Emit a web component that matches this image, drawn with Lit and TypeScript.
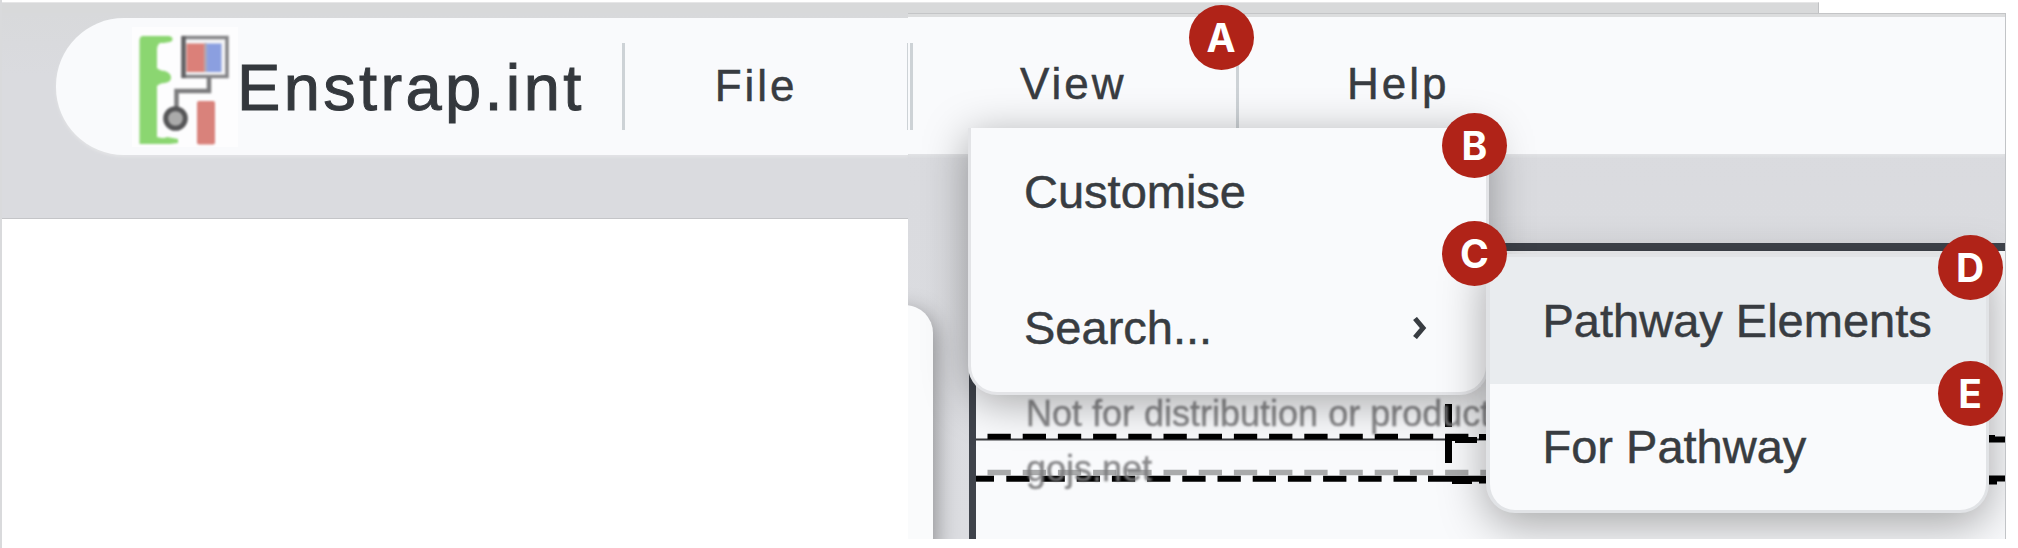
import { LitElement, html, css, svg } from "lit";
import { customElement } from "lit/decorators.js";

const BADGES = [
  { label: "A", x: 1221, y: 37.5 },
  { label: "B", x: 1474.5, y: 145 },
  { label: "C", x: 1474.5, y: 253.5 },
  { label: "D", x: 1970, y: 267.5 },
  { label: "E", x: 1970, y: 393.5 },
];

@customElement("app-logo")
class AppLogo extends LitElement {
  static styles = css`
    :host { display: block; width: 106px; height: 120px; }
    svg { display: block; }
    .soft { filter: blur(1px); }
  `;
  render() {
    return html`<svg width="106" height="120" viewBox="132 27 106 120">
      <rect x="132" y="27" width="106" height="120" fill="#fdfdfe" />
      <g class="soft">
        <path d="M142 36 H169 Q174 37 172 41 Q168 43 160 43 Q157 45 157 50 V68 Q160 71 165 71 Q171 73 171 77.500 Q171 82 165 83 Q160 83 157 86 V137 Q164 139 167 137 L178 139 V143 L170 144 H139.500 V40 Q139.500 37 142 36Z" fill="#8bd671" />
        <rect x="183.500" y="37.500" width="43.500" height="39" fill="#f4f4f6" stroke="#858588" stroke-width="3.500" />
        <path d="M183.500 36 V78" stroke="#626265" stroke-width="4.500" />
        <rect x="186.500" y="43.500" width="18" height="28.500" fill="#db8079" />
        <rect x="206.500" y="43.500" width="15" height="28.500" fill="#8b9fe0" />
        <path d="M205.500 43 V72" stroke="#a39ba7" stroke-width="2" />
        <path d="M209 78 V91 H176.500 V107" fill="none" stroke="#7c7c7e" stroke-width="4.500" />
        <ellipse cx="175.500" cy="118.500" rx="9.800" ry="9.800" fill="#aaa" stroke="#555557" stroke-width="5" />
        <rect x="197" y="101" width="18" height="43.500" rx="2" fill="#d9827b" />
      </g>
    </svg>`;
  }
}

@customElement("app-root")
class AppRoot extends LitElement {
  static styles = css`
    :host {
      display: block; position: relative; width: 2018px; height: 548px; overflow: hidden;
      background: #fff; font-family: "Liberation Sans", Arial, sans-serif; color: #383c41;
      -webkit-text-stroke: 0.5px currentColor;
    }
    .page { box-sizing: border-box; height: 548px; border-left: 2px solid #d9dadc; padding-top: 2px; }
    .strip { box-sizing: border-box; width: 1817px; height: 11px; background: #d8d9da; border-top: 1px solid #e6e6e7; border-right: 1px solid #c0c1c3; }
    .row { display: flex; align-items: flex-start; }
    .left { box-sizing: border-box; width: 906px; height: 206px; padding: 5px 0 0 54px; background: linear-gradient(#d8d9db, #dadbdf 30%); border-bottom: 1px solid #c4c5c8; }
    .pill { box-sizing: border-box; height: 137px; display: flex; align-items: center; background: #f9fafc; border-radius: 68px 0 0 68px; padding-left: 76px; box-shadow: 0 2px 3px #e3e4e6; }
    .brand { font-size: 65px; line-height: 76px; letter-spacing: 3.350px; width: 386px; margin-left: -1px; padding-top: 2px; white-space: nowrap; color: #34383d; -webkit-text-stroke-width: 1px; }
    .rule { width: 3px; height: 87px; background: #cdd2d6; flex: none; }
    .tab { font-size: 44px; line-height: 50px; letter-spacing: 3px; white-space: nowrap; }
    .file { width: 193px; padding-left: 90px; margin-bottom: 1px; }
    .hair { width: 1px; }
    .right { box-sizing: border-box; position: relative; width: 1098px; height: 526px; overflow: hidden; background: linear-gradient(#d9dade, #dcdde1); border-top: 1px solid #c4c5c7; border-right: 1px solid #c2c4c7; }
    .bar { box-sizing: border-box; height: 140px; display: flex; align-items: flex-start; background: #f9fafc; border-top: 3px solid #dcddde; padding: 26px 0 0 2px; box-shadow: 0 2px 3px #e3e4e6; }
    .view { width: 216px; padding: 16px 0 0 107px; }
    .help { padding: 16px 0 0 108px; }
    .card { position: absolute; left: -40px; top: 291px; width: 65px; height: 260px; border-radius: 28px; background: #fafbfc; box-shadow: 3px 6px 22px rgba(0,0,0,.36); }
    .canvas { position: absolute; left: 61px; top: 229px; width: 1050px; height: 320px; box-sizing: border-box; border: 8px solid #3f434b; border-width: 8px 0 0 7px; background: #f9fafc; }
    .lines { position: absolute; left: 0; top: 0; }
    .mark { position: absolute; left: 118px; top: 373px; font-size: 36px; line-height: 54.500px; color: #7d7d7f; white-space: pre; filter: blur(1.1px); opacity: .9; }
    .menu { position: absolute; box-sizing: border-box; background: #f9fafc; font-size: 47px; line-height: 54px; }
    .primary { left: 60px; top: 114px; width: 521px; height: 267px; border: 3px solid #e3e4e7; border-top: 0; border-radius: 0 0 29px 29px; box-shadow: 0 8px 44px rgba(0,0,0,.34); display: grid; grid-template-rows: 128px 127px; row-gap: 8px; }
    .secondary { left: 578px; top: 240px; width: 503px; height: 259px; border: 3px solid #e1e3e6; border-left-width: 4px; border-radius: 0 0 29px 29px; box-shadow: 0 12px 46px rgba(0,0,0,.34); display: grid; grid-template-rows: 127px 126px; }
    .item { display: flex; align-items: center; justify-content: space-between; padding: 0 59px 0 53px; white-space: nowrap; }
    .secondary .item { padding-left: 52.500px; padding-right: 0; }
    .on { background: #e9ecef; }
    .badge { position: absolute; width: 65px; height: 65px; margin: -32.500px 0 0 -32.500px; border-radius: 50%; background: #b02318; color: #fff; font: 700 39px/65px Inter, "Open Sans", sans-serif; text-align: center; -webkit-text-stroke: 0; }
  `;
  render() {
    return html`
      <div class="page">
        <div class="strip"></div>
        <div class="row">
          <section class="left">
            <div class="pill">
              <app-logo></app-logo><div class="brand">Enstrap.int</div>
              <div class="rule"></div><div class="tab file">File</div><div class="rule hair"></div>
            </div>
          </section>
          <section class="right">
            <nav class="bar">
              <div class="rule"></div><div class="tab view">View</div>
              <div class="rule"></div><div class="tab help">Help</div>
            </nav>
            <div class="canvas"></div>
            <div class="card"></div>
            <svg class="lines" width="1098" height="525" viewBox="908 14 1098 525">
              ${svg`
              <path d="M976 439.500 H1486" stroke="#38393c" stroke-width="2"/>
              <path d="M987.500 436.500 H1470" stroke="#000" stroke-width="5.500" stroke-dasharray="23.300 11.900"/>
              <path d="M987.500 472.500 H1486" stroke="#a9aaab" stroke-width="5.500" stroke-dasharray="23.300 11.900"/>
              <path d="M976 478.700 H994" stroke="#000" stroke-width="6"/>
              <path d="M1006.300 478.700 H1429" stroke="#000" stroke-width="6" stroke-dasharray="23.300 11.900"/>
              <path d="M1428 478.700 H1486 M1452 481 H1472 M1479 480.500 H1486" stroke="#000" stroke-width="6"/>
              <path d="M1445 438 H1468 M1455 440 H1477 M1479 437 H1486" stroke="#000" stroke-width="6"/>
              <path d="M1448.500 404 V427 M1448.500 437 V463" stroke="#000" stroke-width="7"/>
              <path d="M1989 438 H1995 M1989 439.500 H2006 M1989 478.500 H2006 M1989 481.500 H1997" stroke="#000" stroke-width="6"/>
              `}
            </svg>
            <div class="mark">Not for distribution or production
gojs.net</div>
            <div class="menu primary">
              <div class="item">Customise</div>
              <div class="item">Search...
                <svg width="14" height="22" viewBox="0 0 14 22"><path d="M2 1.500 L10 11 L2 20.500" fill="none" stroke="#383c41" stroke-width="5"/></svg>
              </div>
            </div>
            <div class="menu secondary">
              <div class="item on">Pathway Elements</div>
              <div class="item">For Pathway</div>
            </div>
          </section>
        </div>
      </div>
      ${BADGES.map((b) => html`<div class="badge" style="left:${b.x}px;top:${b.y}px">${b.label}</div>`)}
    `;
  }
}
